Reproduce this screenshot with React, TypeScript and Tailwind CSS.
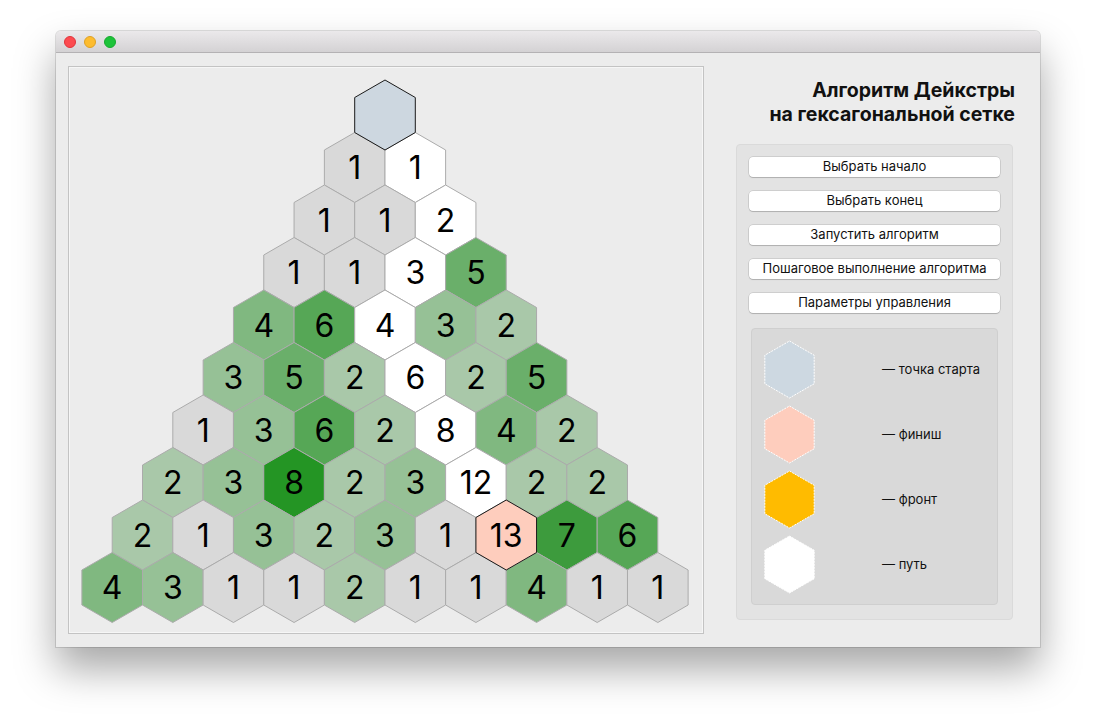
import React from "react";

type Cell = { v: number | null; kind?: "start" | "finish" | "path" };

const R = 35;
const W = R * Math.sqrt(3);

// rows of the triangular board, top to bottom
const rows: Cell[][] = [
  [{ v: null, kind: "start" }],
  [{ v: 1 }, { v: 1, kind: "path" }],
  [{ v: 1 }, { v: 1 }, { v: 2, kind: "path" }],
  [{ v: 1 }, { v: 1 }, { v: 3, kind: "path" }, { v: 5 }],
  [{ v: 4 }, { v: 6 }, { v: 4, kind: "path" }, { v: 3 }, { v: 2 }],
  [{ v: 3 }, { v: 5 }, { v: 2 }, { v: 6, kind: "path" }, { v: 2 }, { v: 5 }],
  [{ v: 1 }, { v: 3 }, { v: 6 }, { v: 2 }, { v: 8, kind: "path" }, { v: 4 }, { v: 2 }],
  [{ v: 2 }, { v: 3 }, { v: 8 }, { v: 2 }, { v: 3 }, { v: 12, kind: "path" }, { v: 2 }, { v: 2 }],
  [{ v: 2 }, { v: 1 }, { v: 3 }, { v: 2 }, { v: 3 }, { v: 1 }, { v: 13, kind: "finish" }, { v: 7 }, { v: 6 }],
  [{ v: 4 }, { v: 3 }, { v: 1 }, { v: 1 }, { v: 2 }, { v: 1 }, { v: 1 }, { v: 4 }, { v: 1 }, { v: 1 }],
];

const weightColor: Record<number, string> = {
  1: "#d9d9d9",
  2: "#a9c8a9",
  3: "#96c196",
  4: "#80b880",
  5: "#6aaf6a",
  6: "#56a756",
  7: "#3d9b3d",
  8: "#249524",
};

function hexPoints(cx: number, cy: number, r: number) {
  const pts: string[] = [];
  for (let i = 0; i < 6; i++) {
    const a = (Math.PI / 180) * (60 * i - 90);
    pts.push(`${(cx + r * Math.cos(a)).toFixed(2)},${(cy + r * Math.sin(a)).toFixed(2)}`);
  }
  return pts.join(" ");
}

function fillFor(c: Cell) {
  if (c.kind === "start") return "#cdd7e0";
  if (c.kind === "finish") return "#fecdbd";
  if (c.kind === "path") return "#ffffff";
  return weightColor[c.v ?? 1];
}

function Board() {
  // panel origin on page is (69,67); top hex centre at (385,115)
  const ox = 385 - 69;
  const oy = 115 - 67;
  const cells: React.ReactNode[] = [];
  const marked: React.ReactNode[] = [];
  rows.forEach((row, r) => {
    row.forEach((c, i) => {
      const cx = ox + (i - r / 2) * W;
      const cy = oy + r * R * 1.5;
      const special = c.kind === "start" || c.kind === "finish";
      const el = (
        <g key={`${r}-${i}`}>
          <polygon
            points={hexPoints(cx, cy, R)}
            fill={fillFor(c)}
            stroke={special ? "#1a1a1a" : "#ababab"}
            strokeWidth={1}
          />
          {c.v !== null && (
            <text
              x={cx}
              y={cy + 11.5}
              textAnchor="middle"
              fontSize={32}
              fontFamily="Inter, 'Noto Sans', sans-serif"
              fill="#000"
            >
              {c.v}
            </text>
          )}
        </g>
      );
      if (special) marked.push(el);
      else cells.push(el);
    });
  });
  return (
    <svg width="634" height="566" className="block">
      {cells}
      {marked}
    </svg>
  );
}

function LegendHex({ color }: { color: string }) {
  return (
    <svg width="51" height="59" className="block shrink-0">
      <polygon points={hexPoints(25.5, 29.5, 28.5)} fill={color} stroke="#ffffff" strokeWidth={1} strokeDasharray="2 1" />
    </svg>
  );
}

const buttons = [
  "Выбрать начало",
  "Выбрать конец",
  "Запустить алгоритм",
  "Пошаговое выполнение алгоритма",
  "Параметры управления",
];

const legend = [
  { color: "#cdd8e1", label: "— точка старта" },
  { color: "#fecdbd", label: "— финиш" },
  { color: "#ffbb00", label: "— фронт" },
  { color: "#ffffff", label: "— путь" },
];

export default function App() {
  return (
    <div
      className="w-[1096px] h-[728px] bg-white pl-[56px] pt-[31px]"
      style={{ fontFamily: "Inter, 'Noto Sans', sans-serif" }}
    >
      <div className="w-[984px] h-[616px] flex flex-col rounded-t-[5px] overflow-hidden bg-[#ececec] shadow-[0_22px_40px_rgba(0,0,0,0.35),0_0_0_1px_rgba(0,0,0,0.12)]">
        <div className="h-[22px] shrink-0 flex items-center gap-[8px] pl-[8px] bg-gradient-to-b from-[#ebe9eb] to-[#d4d2d4] border-b border-[#b4b2b4]">
          <span className="w-[12px] h-[12px] rounded-full bg-[#fc4b50] border border-[#e0343b]" />
          <span className="w-[12px] h-[12px] rounded-full bg-[#fdbc2f] border border-[#dea025]" />
          <span className="w-[12px] h-[12px] rounded-full bg-[#1dc33a] border border-[#18a92f]" />
        </div>
        <div className="flex flex-1 pl-[12px] pt-[13px] pb-[13px]">
          <div className="w-[636px] h-[568px] border border-[#c3c3c3] bg-[#ececec] shadow-[inset_0_0_0_1px_#f6f6f6]">
            <Board />
          </div>
          <div className="flex-1 pl-[32px] pr-[27px] pt-[12px] flex flex-col">
            <div className="text-right font-bold text-[19.5px] leading-[24px] text-[#111] mr-[-2px]">
              Алгоритм Дейкстры
              <br />
              на гексагональной сетке
            </div>
            <div className="mt-[18px] h-[476px] bg-[#e3e3e3] rounded-[4px] border border-[#dadada] px-[12px] pt-[12px] flex flex-col">
              <div className="flex flex-col gap-[14px]">
                {buttons.map((b) => (
                  <div
                    key={b}
                    className="h-[20px] bg-white rounded-[4px] shadow-[0_0_0_0.5px_rgba(0,0,0,0.18),0_1px_1px_rgba(0,0,0,0.15)] flex items-center justify-center text-[13px] text-[#111]"
                  >
                    {b}
                  </div>
                ))}
              </div>
              <div className="mt-[15px] mx-[2px] h-[277px] bg-[#d9d9d9] rounded-[4px] border border-[#cfcfcf] pl-[12px] pt-[11px] flex flex-col gap-[6px]">
                {legend.map((l) => (
                  <div key={l.label} className="flex items-center">
                    <LegendHex color={l.color} />
                    <span className="ml-[67px] text-[13px] text-[#111]">{l.label}</span>
                  </div>
                ))}
              </div>
            </div>
          </div>
        </div>
      </div>
    </div>
  );
}
